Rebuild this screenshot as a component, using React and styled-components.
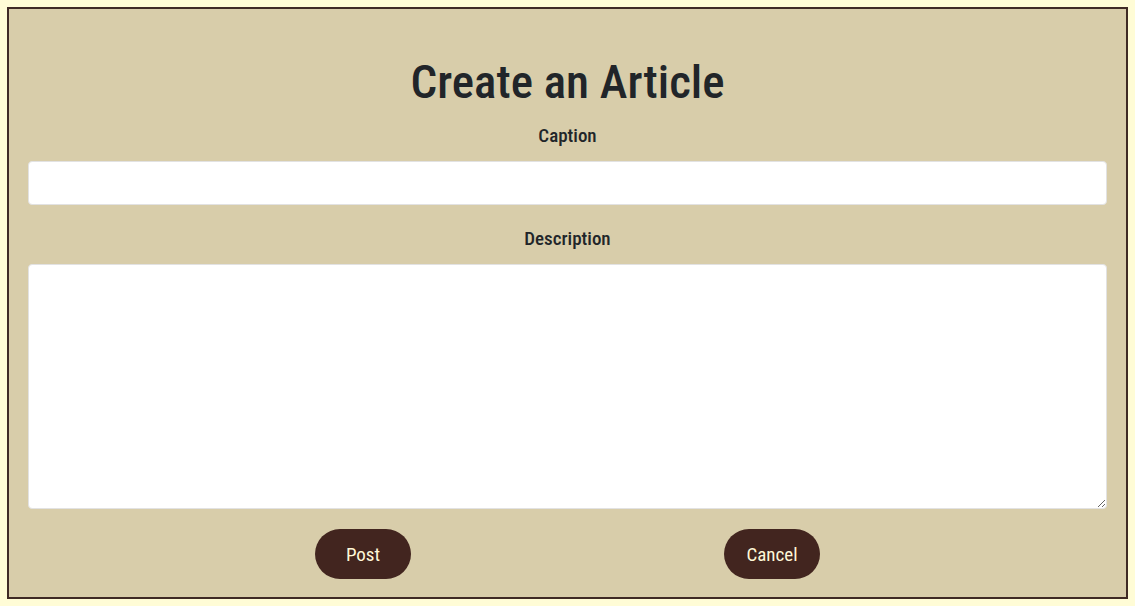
import React from 'react'
import styled, { createGlobalStyle } from 'styled-components'

const GlobalStyle = createGlobalStyle`
  html, body {
    margin: 0;
    padding: 0;
    background-color: #fffcd6;
    font-family: "Roboto Condensed", "Liberation Sans Narrow", Roboto, sans-serif;
  }
  * { box-sizing: border-box; }
`

const Card = styled.form`
  margin: 7px;
  border: 2px solid #3f2a25;
  background-color: #d8cdaa;
  padding: 41px 19px 18px;
  display: flex;
  flex-direction: column;
  align-items: stretch;
`

const Title = styled.h1`
  margin: 0;
  font-size: 47px;
  line-height: 64px;
  font-weight: 500;
  text-align: center;
  color: #212529;
`

const Label = styled.label`
  display: block;
  margin-top: ${p => p.gap}px;
  font-size: 19px;
  line-height: 24px;
  font-weight: 500;
  text-align: center;
  color: #212529;
`

const Field = styled.input`
  display: block;
  width: 100%;
  margin-top: 13px;
  height: 44px;
  border: 1px solid #e2e2e2;
  border-radius: 4px;
  background: #fff;
  padding: 6px 12px;
  font-size: 16px;
  outline: none;
`

const Area = styled.textarea`
  display: block;
  width: 100%;
  margin-top: 13px;
  height: 245px;
  border: 1px solid #e2e2e2;
  border-radius: 4px;
  background: #fff;
  padding: 6px 12px;
  font-size: 16px;
  outline: none;
`

const ButtonRow = styled.div`
  display: flex;
  justify-content: center;
  gap: 313px;
  margin-top: 20px;
`

const Button = styled.button`
  width: 96px;
  height: 50px;
  border: none;
  border-radius: 25px;
  background-color: #42251f;
  color: #fff8d8;
  font-family: inherit;
  font-size: 19px;
  font-weight: 400;
  cursor: pointer;
`

function App() {
  return (
    <>
      <GlobalStyle />
      <Card onSubmit={e => e.preventDefault()}>
        <Title>Create an Article</Title>
        <Label gap={10} htmlFor="caption">Caption</Label>
        <Field id="caption" type="text" />
        <Label gap={22} htmlFor="description">Description</Label>
        <Area id="description" />
        <ButtonRow>
          <Button type="submit">Post</Button>
          <Button type="button">Cancel</Button>
        </ButtonRow>
      </Card>
    </>
  )
}

export default App
